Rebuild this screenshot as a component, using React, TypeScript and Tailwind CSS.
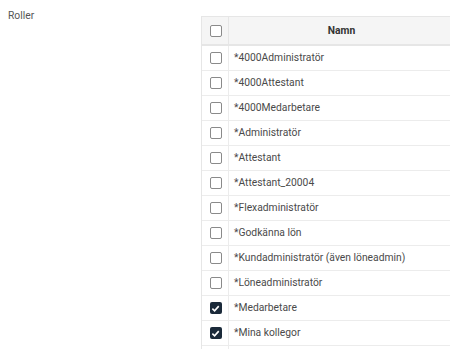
import React from "react";

const rows: { name: string; checked: boolean }[] = [
  { name: "*4000Administratör", checked: false },
  { name: "*4000Attestant", checked: false },
  { name: "*4000Medarbetare", checked: false },
  { name: "*Administratör", checked: false },
  { name: "*Attestant", checked: false },
  { name: "*Attestant_20004", checked: false },
  { name: "*Flexadministratör", checked: false },
  { name: "*Godkänna lön", checked: false },
  { name: "*Kundadministratör (även löneadmin)", checked: false },
  { name: "*Löneadministratör", checked: false },
  { name: "*Medarbetare", checked: true },
  { name: "*Mina kollegor", checked: true },
  { name: "", checked: false },
];

function Box({ checked }: { checked: boolean }) {
  if (checked) {
    return (
      <div className="w-[12px] h-[12px] rounded-[2px] bg-[#1b2a3a] flex items-center justify-center">
        <svg width="9" height="9" viewBox="0 0 10 10">
          <path d="M1.5 5.2 L4 7.6 L8.6 2.4" fill="none" stroke="#fff" strokeWidth="1.8" />
        </svg>
      </div>
    );
  }
  return <div className="w-[12px] h-[12px] rounded-[2px] border border-[#8a8a8a] bg-white" />;
}

export default function App() {
  return (
    <div
      className="w-[450px] h-[349px] overflow-hidden bg-white relative"
      style={{ fontFamily: "Roboto, 'Liberation Sans', sans-serif" }}
    >
      <div className="flex">
        <div className="w-[201px] shrink-0 pl-[8px] pt-[8px] text-[10.3px] text-[#555]">Roller</div>
        <div className="mt-[16px] w-[253px] shrink-0 border-l border-t border-[#e6e6e6] text-[10.3px]">
          <div className="flex h-[29px] bg-[#f5f5f5] border-b-2 border-[#e6e6e6]">
            <div className="w-[27px] shrink-0 flex items-center justify-center border-r border-[#e6e6e6] pl-[1px]">
              <Box checked={false} />
            </div>
            <div className="flex-1 flex items-center justify-center font-bold text-[#333]">Namn</div>
          </div>
          {rows.map((r, i) => (
            <div key={i} className="flex h-[25px] border-b border-[#ececec]">
              <div className="w-[27px] shrink-0 flex items-center justify-center border-r border-[#ececec] pl-[1px]">
                {r.name && <Box checked={r.checked} />}
              </div>
              <div className="flex-1 flex items-center pl-[5px] text-[#4a4a4a] whitespace-nowrap">{r.name}</div>
            </div>
          ))}
        </div>
      </div>
    </div>
  );
}
